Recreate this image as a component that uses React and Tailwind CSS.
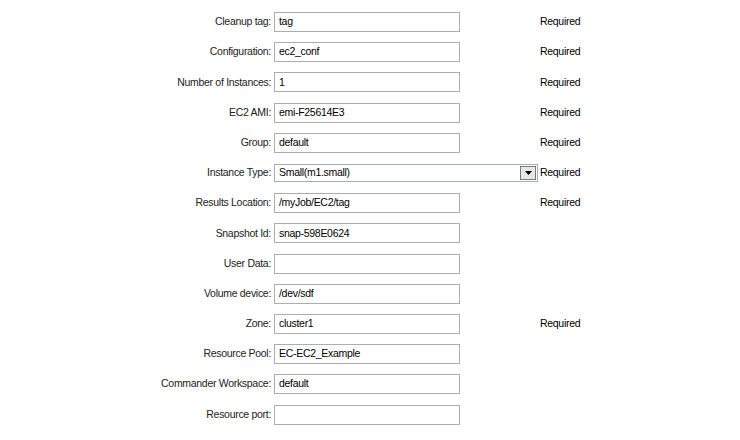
import React from 'react';

const FIELDS = [
  { label: 'Cleanup tag:', value: 'tag', required: true },
  { label: 'Configuration:', value: 'ec2_conf', required: true },
  { label: 'Number of Instances:', value: '1', required: true },
  { label: 'EC2 AMI:', value: 'emi-F25614E3', required: true },
  { label: 'Group:', value: 'default', required: true },
  { label: 'Instance Type:', value: 'Small(m1.small)', required: true, select: true },
  { label: 'Results Location:', value: '/myJob/EC2/tag', required: true },
  { label: 'Snapshot Id:', value: 'snap-598E0624' },
  { label: 'User Data:', value: '' },
  { label: 'Volume device:', value: '/dev/sdf' },
  { label: 'Zone:', value: 'cluster1', required: true },
  { label: 'Resource Pool:', value: 'EC-EC2_Example' },
  { label: 'Commander Workspace:', value: 'default' },
  { label: 'Resource port:', value: '' }
];

function TextBox({ value }) {
  return (
    <div className="w-[186px] h-[20px] border border-[#abadb3] bg-white flex items-center px-[4px] text-black">
      {value}
    </div>
  );
}

function SelectBox({ value }) {
  return (
    <div className="w-[264px] h-[18px] border border-[#a5acb5] bg-white flex items-center text-black">
      <span className="flex-1 px-[4px]">{value}</span>
      <div className="w-[16px] h-[14px] mr-[1px] border border-[#7a7a7a] bg-[#e6e6e6] flex items-center justify-center">
        <svg width="7" height="4" viewBox="0 0 7 4">
          <path d="M0 0h7L3.5 4z" fill="#000" />
        </svg>
      </div>
    </div>
  );
}

export default function App() {
  return (
    <div
      className="w-[740px] h-[440px] bg-white pt-[7px] text-[10.5px] tracking-[-0.3px] text-[#222]"
      style={{ fontFamily: '"Liberation Sans", Arial, sans-serif' }}
    >
      {FIELDS.map((f) => (
        <div key={f.label} className="grid grid-cols-[274px_266px_auto] h-[30.2px] items-center">
          <div className="text-right pr-[3px]">{f.label}</div>
          <div>{f.select ? <SelectBox value={f.value} /> : <TextBox value={f.value} />}</div>
          <div className="text-black">{f.required ? 'Required' : ''}</div>
        </div>
      ))}
    </div>
  );
}
